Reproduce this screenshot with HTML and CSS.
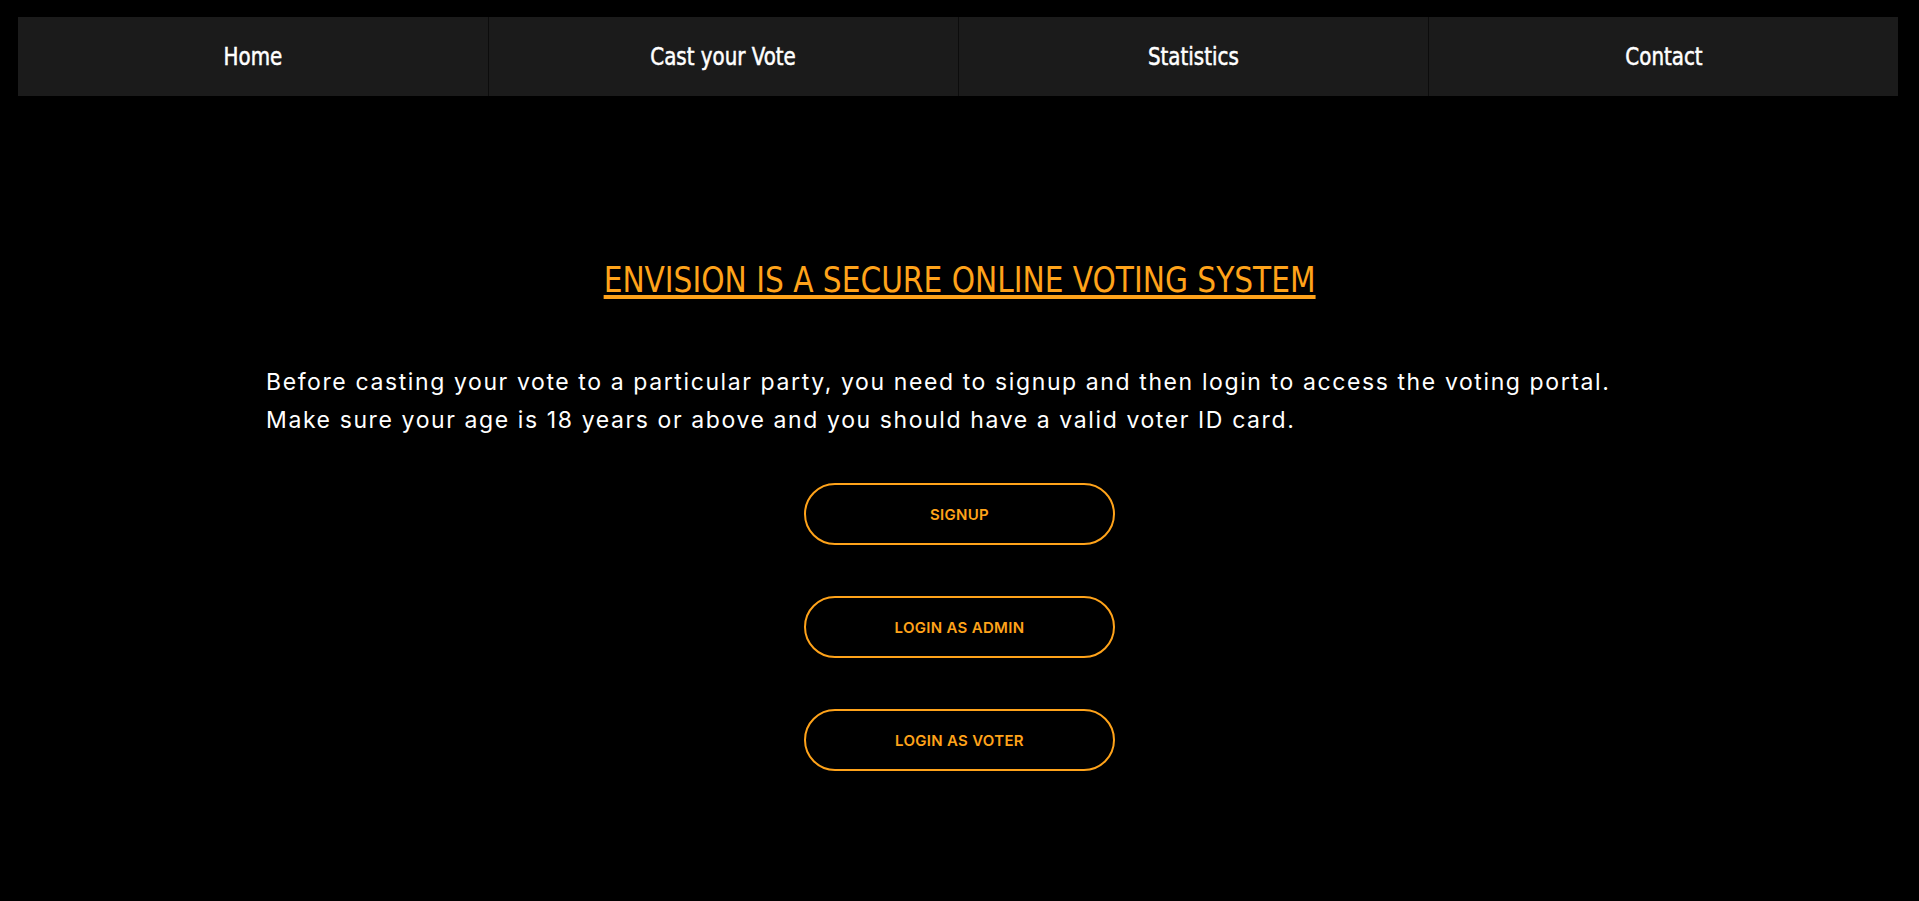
FILE: index.html
```html
<!DOCTYPE html>
<html lang="en">
<head>
<meta charset="utf-8">
<title>Envision</title>
<link rel="stylesheet" href="styles.css">
</head>
<body>
<nav class="nav">
  <a class="nav-item" href="#"><span class="nav-label">Home</span></a>
  <a class="nav-item" href="#"><span class="nav-label">Cast your Vote</span></a>
  <a class="nav-item" href="#"><span class="nav-label">Statistics</span></a>
  <a class="nav-item" href="#"><span class="nav-label">Contact</span></a>
</nav>
<main class="main">
  <h1 class="title"><span class="title-text">ENVISION IS A SECURE ONLINE VOTING SYSTEM</span></h1>
  <p class="intro">Before casting your vote to a particular party, you need to signup and then login to access the voting portal.<br>Make sure your age is 18 years or above and you should have a valid voter ID card.</p>
  <div class="actions">
    <a class="btn" href="#">SIGNUP</a>
    <a class="btn" href="#">LOGIN AS ADMIN</a>
    <a class="btn" href="#">LOGIN AS VOTER</a>
  </div>
</main>
</body>
</html>
```
FILE: styles.css
```css
html, body {
  margin: 0;
  padding: 0;
  background: #000;
}
body {
  height: 901px;
  overflow: hidden;
}
.nav {
  display: grid;
  grid-template-columns: repeat(4, 1fr);
  margin: 17px 21px 0 18px;
  height: 79px;
  background: #1b1b1b;
}
.nav-item {
  display: flex;
  align-items: center;
  justify-content: center;
  color: #fff;
  text-decoration: none;
  font-family: "DejaVu Sans Condensed", "DejaVu Sans", sans-serif;
  font-stretch: condensed;
  font-size: 24px;
  font-weight: 400;
}
.nav-label {
  display: inline-block;
  transform: scaleX(0.92);
  -webkit-text-stroke: 0.5px #fff;
}
.nav-item + .nav-item {
  border-left: 1px solid #0c0c0c;
}
.main {
  display: flex;
  flex-direction: column;
}
.title {
  margin: 160px 0 0;
  text-align: center;
  color: #ffa31a;
  font-family: "DejaVu Sans Condensed", "DejaVu Sans", sans-serif;
  font-stretch: condensed;
  font-weight: 400;
  font-size: 36px;
  line-height: 48px;
}
.title-text {
  display: inline-block;
  transform: scaleX(0.916);
  text-decoration: underline;
  text-decoration-thickness: 4px;
  text-underline-offset: 3px;
}
.intro {
  margin: 59px 0 0 266px;
  color: #fff;
  font-family: Inter, "Open Sans", sans-serif;
  font-size: 23px;
  letter-spacing: 1.6px;
  line-height: 38px;
}
.actions {
  display: flex;
  flex-direction: column;
  align-items: center;
  gap: 51px;
  margin-top: 44px;
}
.btn {
  display: flex;
  align-items: center;
  justify-content: center;
  box-sizing: border-box;
  width: 311px;
  height: 62px;
  border: 2px solid #ffa31a;
  border-radius: 31px;
  color: #ffa31a;
  text-decoration: none;
  font-family: Inter, "Open Sans", sans-serif;
  font-weight: 600;
  font-size: 15px;
  letter-spacing: 0.3px;
}
```
